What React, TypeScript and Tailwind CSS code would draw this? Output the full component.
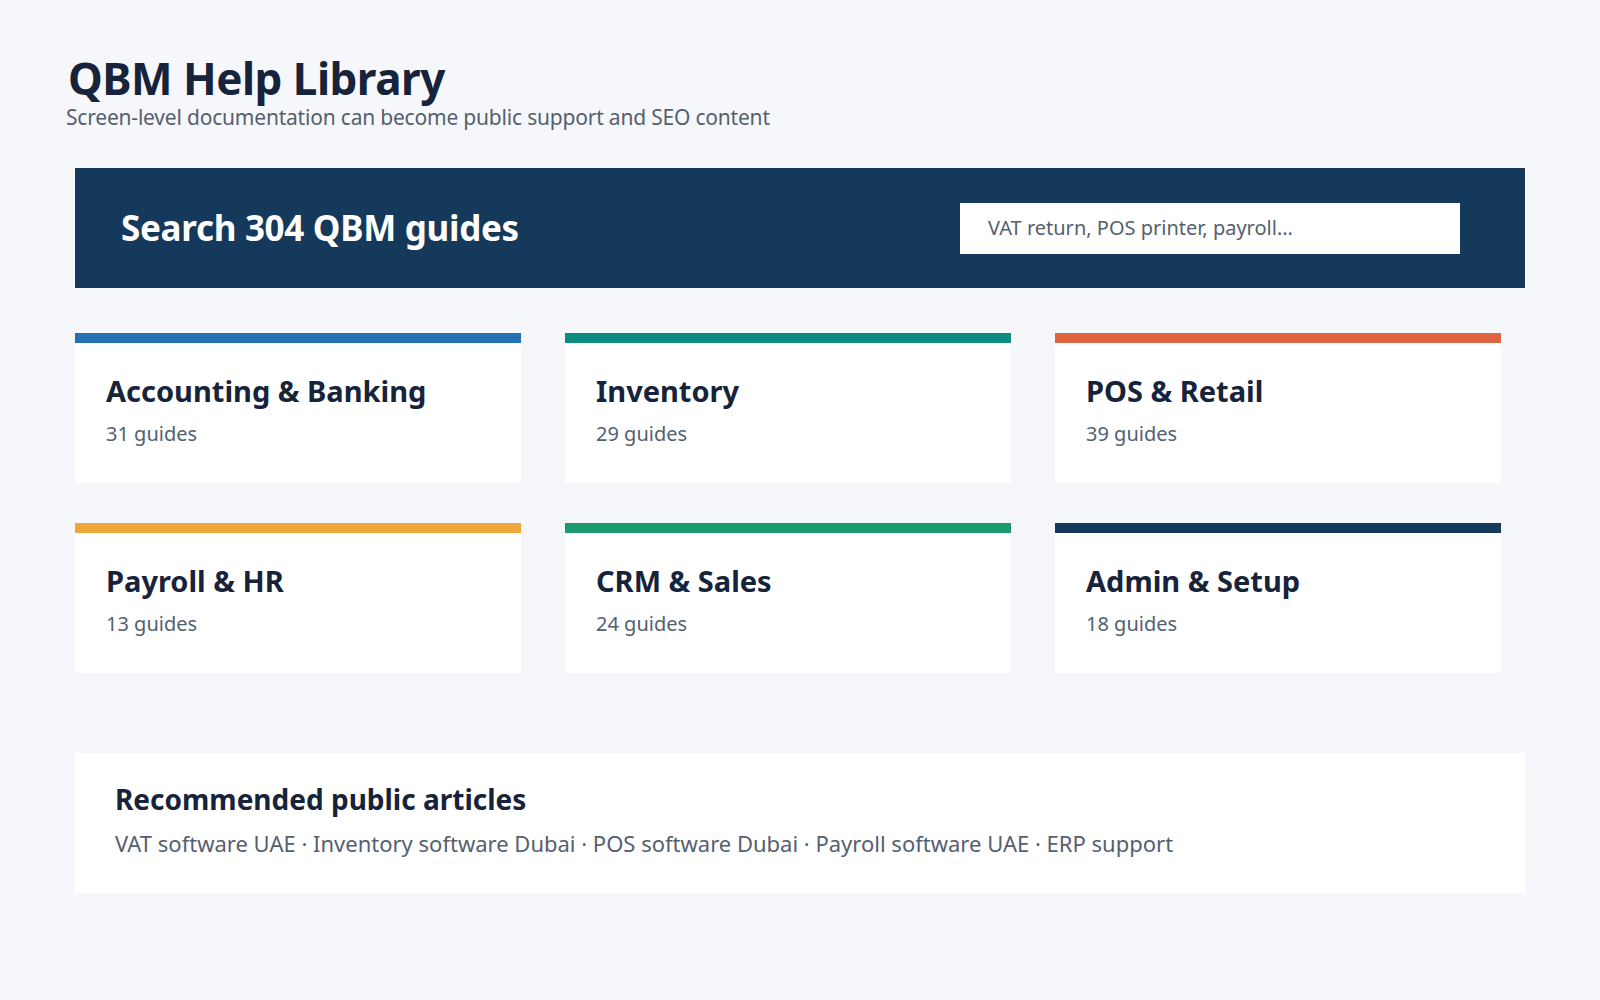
const categories = [
  { name: "Accounting & Banking", count: 31, bar: "bg-[#2470b3]" },
  { name: "Inventory", count: 29, bar: "bg-[#0e8c80]" },
  { name: "POS & Retail", count: 39, bar: "bg-[#e0643f]" },
  { name: "Payroll & HR", count: 13, bar: "bg-[#f0a73a]" },
  { name: "CRM & Sales", count: 24, bar: "bg-[#1a9a6c]" },
  { name: "Admin & Setup", count: 18, bar: "bg-[#15395a]" },
];

export default function App() {
  return (
    <div className="w-[1600px] h-[1000px] bg-[#f6f7fb] font-['Noto_Sans',sans-serif] overflow-hidden">
      <div className="pl-[66px] pt-[52px]">
        <h1 className="text-[44px] leading-[52px] font-bold text-[#17233a] pl-[2px] tracking-[-0.5px]">QBM Help Library</h1>
        <p className="text-[21px] leading-[26px] text-[#55606f] tracking-[-0.2px]">
          Screen-level documentation can become public support and SEO content
        </p>
      </div>

      <div className="ml-[75px] mt-[38px] w-[1450px] h-[120px] bg-[#15395a] flex items-center justify-between pl-[46px] pr-[65px]">
        <h2 className="text-[35px] font-bold text-white tracking-[-0.3px]">Search 304 QBM guides</h2>
        <div className="w-[500px] h-[51px] bg-white flex items-center px-[28px] text-[20px] text-[#55606f]">
          VAT return, POS printer, payroll...
        </div>
      </div>

      <div className="ml-[75px] mt-[45px] grid grid-cols-[446px_446px_446px] gap-x-[44px] gap-y-[40px]">
        {categories.map((c) => (
          <div key={c.name} className="bg-white h-[150px]">
            <div className={`h-[10px] ${c.bar}`} />
            <div className="pl-[31px] pt-[30px]">
              <div className="text-[29px] leading-[36px] font-bold text-[#17233a]">{c.name}</div>
              <div className="mt-[10px] text-[20px] text-[#55606f]">{c.count} guides</div>
            </div>
          </div>
        ))}
      </div>

      <div className="ml-[75px] mt-[80px] w-[1450px] h-[140px] bg-white pl-[40px] pt-[28px]">
        <h3 className="text-[28px] leading-[36px] font-bold text-[#17233a]">Recommended public articles</h3>
        <p className="mt-[10px] text-[22px] text-[#55606f]">
          VAT software UAE · Inventory software Dubai · POS software Dubai · Payroll software UAE · ERP support
        </p>
      </div>
    </div>
  );
}
